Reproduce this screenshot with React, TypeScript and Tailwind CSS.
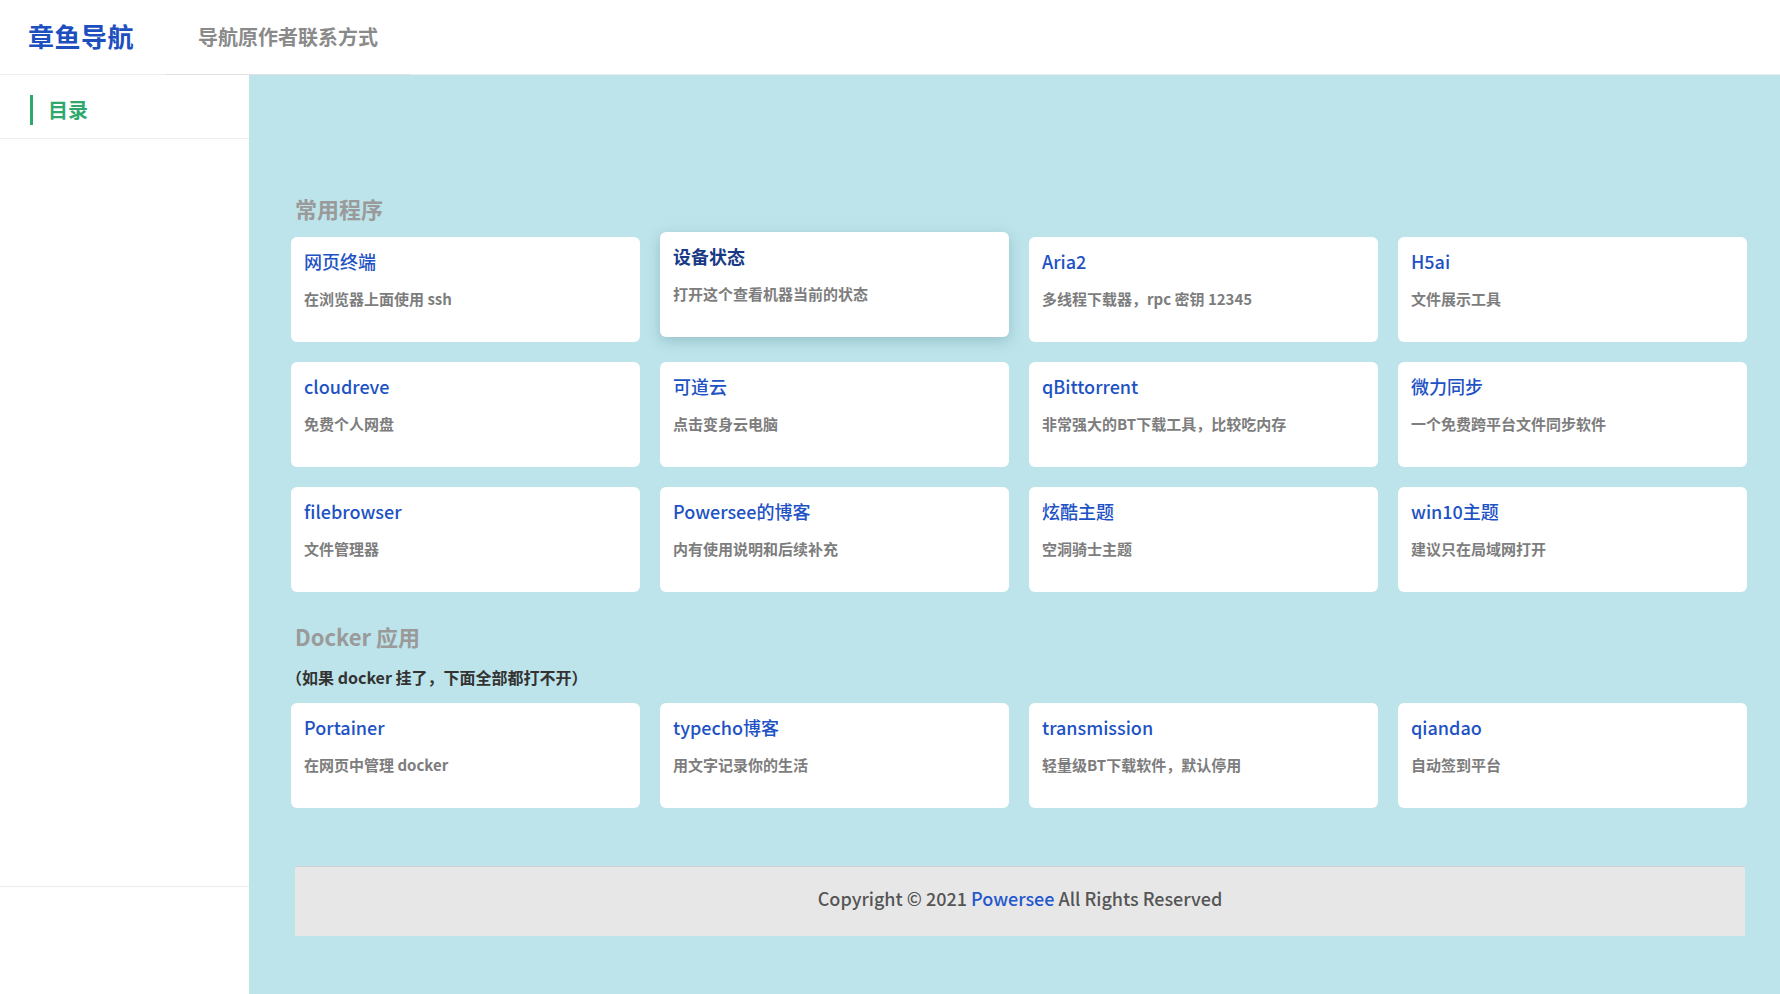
const common = [
  { title: '网页终端', desc: '在浏览器上面使用 ssh' },
  { title: '设备状态', desc: '打开这个查看机器当前的状态', hover: true },
  { title: 'Aria2', desc: '多线程下载器，rpc 密钥 12345' },
  { title: 'H5ai', desc: '文件展示工具' },
  { title: 'cloudreve', desc: '免费个人网盘' },
  { title: '可道云', desc: '点击变身云电脑' },
  { title: 'qBittorrent', desc: '非常强大的BT下载工具，比较吃内存' },
  { title: '微力同步', desc: '一个免费跨平台文件同步软件' },
  { title: 'filebrowser', desc: '文件管理器' },
  { title: 'Powersee的博客', desc: '内有使用说明和后续补充' },
  { title: '炫酷主题', desc: '空洞骑士主题' },
  { title: 'win10主题', desc: '建议只在局域网打开' },
]

const docker = [
  { title: 'Portainer', desc: '在网页中管理 docker' },
  { title: 'typecho博客', desc: '用文字记录你的生活' },
  { title: 'transmission', desc: '轻量级BT下载软件，默认停用' },
  { title: 'qiandao', desc: '自动签到平台' },
]

type Item = { title: string; desc: string; hover?: boolean }

function Card({ item }: { item: Item }) {
  return (
    <a
      href="#"
      className={
        item.hover
          ? 'block h-[105px] rounded-[6px] bg-white px-[13px] pt-[12px] -translate-y-[5px] shadow-[0_4px_14px_rgba(40,90,110,0.25)]'
          : 'block h-[105px] rounded-[6px] bg-white px-[13px] pt-[12px]'
      }
    >
      <div
        className={
          item.hover
            ? 'text-[18px] leading-[24px] font-bold text-[#183a86]'
            : 'text-[18px] leading-[24px] font-medium text-[#2152c4]'
        }
      >
        {item.title}
      </div>
      <div className="mt-[15px] text-[15px] leading-[22px] font-semibold text-[#7d7d7d]">{item.desc}</div>
    </a>
  )
}

export default function App() {
  return (
    <div className="min-h-[994px] bg-white font-['Noto_Sans_CJK_SC',sans-serif]">
      <header className="flex h-[75px] items-stretch border-b border-[#ececec] bg-white">
        <div className="flex items-center pb-[4px] pl-[28px] pr-[32px]">
          <span className="text-[26px] font-bold tracking-[0.5px] text-[#1d4fbf]">章鱼导航</span>
        </div>
        <a href="#" className="-mb-px flex items-center border-b border-[#e0e0e0] px-[32px]">
          <span className="text-[20px] font-semibold text-[#8a8a8a]">导航原作者联系方式</span>
        </a>
      </header>

      <div className="flex min-h-[919px]">
        <aside className="w-[249px] shrink-0 bg-white">
          <div className="h-[812px] border-b border-[#ececec]">
            <div className="flex h-[64px] items-center border-b border-[#ececec] pl-[30px] pt-[6px]">
              <span className="h-[30px] w-[3px] bg-[#2fa86e]" />
              <span className="ml-[15px] text-[20px] font-bold text-[#2fa86e]">目录</span>
            </div>
          </div>
        </aside>

        <main className="flex-1 bg-[#bde4ea] pl-[42px] pr-[33px] pt-[118px]">
          <h2 className="pl-[4px] text-[22px] leading-[30px] font-bold text-[#9a9a9a]">常用程序</h2>
          <div className="mt-[14px] grid grid-cols-4 gap-x-[20px] gap-y-[20px]">
            {common.map((item) => (
              <Card key={item.title} item={item} />
            ))}
          </div>

          <h2 className="mt-[29px] pl-[4px] text-[22px] leading-[30px] font-bold text-[#9a9a9a]">Docker 应用</h2>
          <p className="-ml-[5px] mt-[14px] text-[16px] leading-[24px] font-bold text-[#333]">
            （如果 docker 挂了，下面全部都打不开）
          </p>
          <div className="mt-[14px] grid grid-cols-4 gap-x-[20px]">
            {docker.map((item) => (
              <Card key={item.title} item={item} />
            ))}
          </div>

          <footer className="ml-[4px] mr-[2px] mt-[58px] flex h-[70px] items-center justify-center border-t border-[#d2d2d2] bg-[#e7e7e7] pb-[6px]">
            <p className="text-[18px] font-medium text-[#555]">
              Copyright © 2021 <a href="#" className="text-[#2458cc]">Powersee</a> All Rights Reserved
            </p>
          </footer>
        </main>
      </div>
    </div>
  )
}
